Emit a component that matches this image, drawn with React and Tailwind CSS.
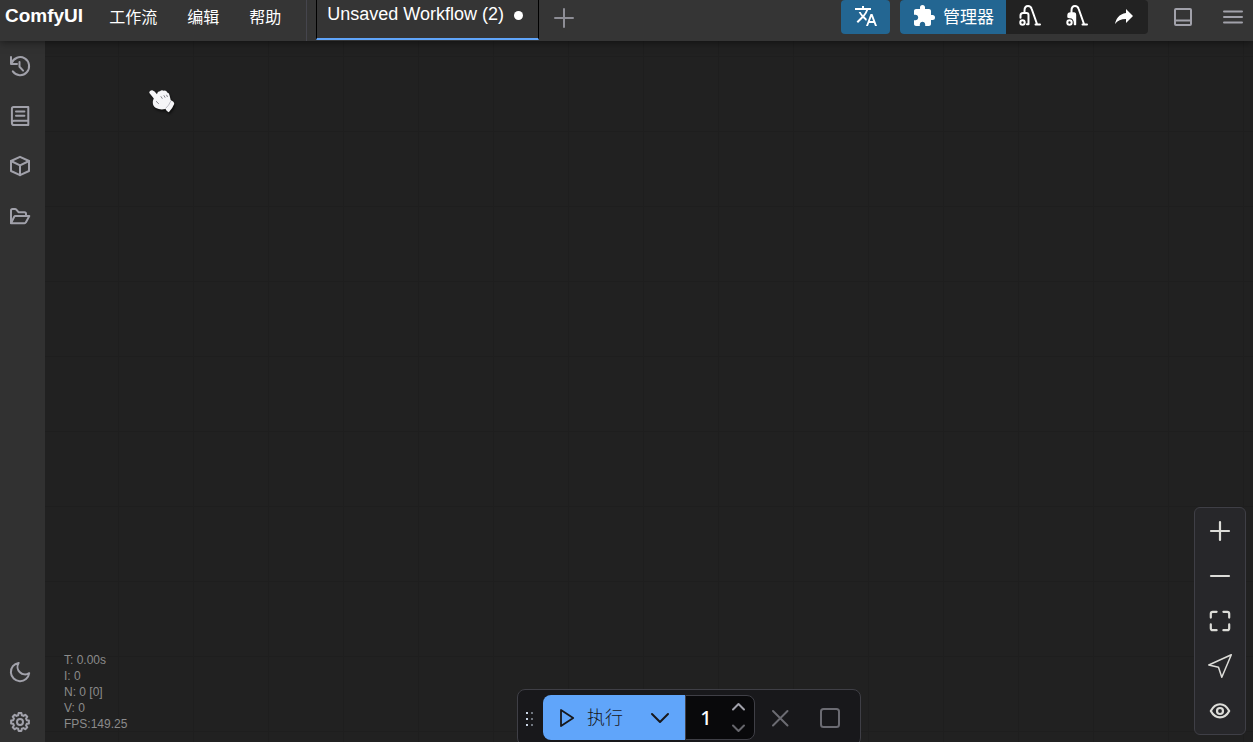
import { useState } from "react";
import { MdExtension, MdTranslate } from "react-icons/md";

const menuItems = ["工作流", "编辑", "帮助"];

const stats = ["T: 0.00s", "I: 0", "N: 0 [0]", "V: 0", "FPS:149.25"];

// eight-tooth outline for the settings gear
const gearPoints = Array.from({ length: 8 })
  .flatMap((_, i) =>
    [
      [-15, 7],
      [-9, 9],
      [9, 9],
      [15, 7],
    ].map(([offset, radius]) => {
      const angle = ((i * 45 + offset) * Math.PI) / 180;
      return `${(12 + radius * Math.cos(angle)).toFixed(2)},${(
        12 +
        radius * Math.sin(angle)
      ).toFixed(2)}`;
    })
  )
  .join(" ");

function Icon({ children, strokeWidth = 1.6, className = "" }) {
  return (
    <svg
      width="24"
      height="24"
      viewBox="0 0 24 24"
      fill="none"
      stroke="currentColor"
      strokeWidth={strokeWidth}
      strokeLinecap="round"
      strokeLinejoin="round"
      aria-hidden="true"
      className={`shrink-0 ${className}`}
    >
      {children}
    </svg>
  );
}

const sidebarTop = [
  {
    label: "队列",
    icon: (
      <>
        <path d="M3 3v7h6" />
        <path d="M3.6 9.2A9 9 0 1 1 4.8 17.4" />
        <path d="M11.5 8v4.8l3.6 3.8" />
      </>
    ),
  },
  {
    label: "节点库",
    icon: (
      <>
        <path d="M20.3 16.8V3H5.6Q3.9 3 3.9 4.7V19q0 2.1 2.1 2.1h14.3v-4.3H6q-2.1 0-2.1 2" />
        <path d="M8 7.4h8.4M8 11.8h8.4" />
      </>
    ),
  },
  {
    label: "模型库",
    icon: (
      <>
        <path d="M12 2.8 21 7v10l-9 4.2L3 17V7z" />
        <path d="m3 7 9 4.4L21 7M12 11.4v9.8" />
      </>
    ),
  },
  {
    label: "工作流",
    icon: (
      <>
        <path d="M3 19V6.5Q3 5 4.5 5H7q.8 0 1.3.6L10.5 8.2H16.5Q18 8.2 18 9.7V12" />
        <path d="M3 19.2 6.2 12.8Q6.6 12 7.5 12H21.3L17.8 18.4Q17.4 19.2 16.5 19.2z" />
      </>
    ),
  },
];

const sidebarBottom = [
  {
    label: "切换主题",
    icon: <path d="M10.6 2.9A9.2 9.2 0 1 0 21.2 13.2 7.6 7.6 0 0 1 10.6 2.9z" />,
  },
  {
    label: "设置",
    icon: (
      <>
        <polygon points={gearPoints} />
        <circle cx="12" cy="12" r="3" />
      </>
    ),
  },
];

const canvasTools = [
  { label: "放大", icon: <path d="M12 3v18M3 12h18" /> },
  { label: "缩小", icon: <path d="M3 12h18" /> },
  {
    label: "适应视图",
    icon: (
      <path d="M2.8 8.6V4.8q0-2 2-2h3.8M15.4 2.8h3.8q2 0 2 2v3.8M21.2 15.4v3.8q0 2-2 2h-3.8M8.6 21.2H4.8q-2 0-2-2v-3.8" />
    ),
  },
  {
    label: "选择模式",
    thin: true,
    icon: <path d="M23.3.8.8 11 10.5 13.3 13.8 23.3z" />,
  },
  {
    label: "显示连线",
    icon: (
      <>
        <path d="M2.8 12C7.5 3 16.5 3 21.2 12 16.5 20.5 7.5 20.5 2.8 12z" />
        <circle cx="12" cy="12" r="3" />
      </>
    ),
  },
];

function SidebarButton({ item }) {
  return (
    <button
      aria-label={item.label}
      className="flex h-[50px] w-10 items-center justify-center text-[#a1a1aa] hover:text-white"
    >
      <Icon strokeWidth={2}>{item.icon}</Icon>
    </button>
  );
}

function Vacuum({ filled }) {
  return (
    <Icon strokeWidth={2}>
      {filled ? (
        <path
          d="M3 14V12.5Q3 10 5.5 10H9Q10.500 10 10.500 12V21.500H9.500Q10 14.500 4.500 14.500z"
          fill="currentColor"
          strokeWidth="1.4"
        />
      ) : (
        <path d="M2.5 14.8V12.5Q2.5 10 5 10H8.500Q10.500 10 10.500 12V21.300H9" />
      )}
      <path d="M6.500 9.500V7.500Q6.500 3 10 3 12.800 3 13.700 6L19 21M17.500 21.500H22" />
      <circle cx="4.500" cy="19.500" r="2.200" />
    </Icon>
  );
}

function TopBar() {
  return (
    <header className="relative z-10 flex h-[41px] shrink-0 items-start justify-between bg-[#353535] shadow-[0_1px_8px_rgba(0,0,0,0.5)]">
      <div className="flex h-full items-start">
        <h1 className="pl-[5px] text-[19px] leading-8 font-bold">ComfyUI</h1>

        <nav className="ml-[11px] flex">
          {menuItems.map((item) => (
            <button
              key={item}
              className="px-[15px] text-base leading-9 hover:bg-[#444]"
            >
              {item}
            </button>
          ))}
        </nav>

        <div className="ml-[10px] h-full w-px bg-[#45454d]" />

        <div className="ml-[9px] flex h-10 items-start border-x border-b-2 border-x-black border-b-[#60a5fa] pr-[15px] pl-[10px]">
          <span className="text-lg leading-7 whitespace-nowrap">
            Unsaved Workflow (2)
          </span>
          <span className="mt-[11px] ml-[10px] size-[9px] rounded-full bg-white" />
        </div>

        <button
          aria-label="新建工作流"
          className="ml-[13px] flex h-9 items-center text-[#8d8d95]"
        >
          <Icon strokeWidth={2}>
            <path d="M12 3v18M3 12h18" />
          </Icon>
        </button>
      </div>

      <div className="flex items-start">
        <button
          aria-label="翻译"
          className="flex h-[34px] w-[49px] items-center justify-center rounded bg-[#236692] pb-[2px]"
        >
          <MdTranslate size={24} />
        </button>

        <div className="ml-[10px] flex h-[34px] overflow-hidden rounded bg-[#222222]">
          <button className="flex w-[106px] items-center bg-[#236692] pl-3 text-[17px] leading-none">
            <MdExtension size={24} className="mb-[3px] shrink-0" />
            <span className="ml-[7px] whitespace-nowrap">管理器</span>
          </button>
          <button
            aria-label="卸载模型"
            className="flex w-[47px] items-center justify-center pb-1"
          >
            <Vacuum />
          </button>
          <button
            aria-label="释放模型和节点缓存"
            className="flex w-[47px] items-center justify-center pb-1"
          >
            <Vacuum filled />
          </button>
          <button
            aria-label="分享"
            className="flex w-12 items-center justify-center pb-[2px]"
          >
            <svg width="24" height="24" viewBox="0 0 24 24" fill="currentColor">
              <path d="M21 12L14 5V9C7 10 4 15 3 20C5.5 16.5 9 14.9 14 14.9V19L21 12Z" />
            </svg>
          </button>
        </div>

        <div className="flex h-[34px] items-center text-[#a1a1aa]">
          <button aria-label="切换底部面板" className="ml-[23px]">
            <Icon strokeWidth={2}>
              <rect x="4" y="4" width="16" height="16" rx="1" />
              <path d="M4 15.500h16" />
            </Icon>
          </button>
          <button aria-label="隐藏菜单" className="mr-2 ml-[26px]">
            <Icon strokeWidth={2}>
              <path d="M3 6.500h18M3 12h18M3 17.500h18" />
            </Icon>
          </button>
        </div>
      </div>
    </header>
  );
}

function ActionBar() {
  const [batchCount, setBatchCount] = useState(1);

  return (
    <div className="absolute top-[648px] left-[472px] flex items-center rounded-lg border border-[#3f3f46] bg-[#18181b] py-[5px] pr-[18px] pl-[7px]">
      <svg width="18" height="24" viewBox="0 0 18 24" className="shrink-0">
        <g fill="#c8d4e4">
          <path d="M1 6h2v2H1zM1 12h2v2H1zM1 18h2v2H1z" />
          <path d="M6 6h2v2H6zM6 12h2v2H6zM6 18h2v2H6z" opacity="0.5" />
        </g>
      </svg>

      <button className="flex h-[45px] items-center rounded-l-lg bg-[#60a5fa] pr-[5px] pl-3 text-[#18181b]">
        <Icon strokeWidth={1.8}>
          <path d="M6 4v16L18.2 12z" />
        </Icon>
        <span className="ml-2 text-lg leading-none font-light whitespace-nowrap">
          执行
        </span>
      </button>
      <button
        aria-label="执行选项"
        className="flex h-[45px] w-[57px] items-center bg-[#60a5fa] pl-5 text-[#18181b]"
      >
        <Icon strokeWidth={2}>
          <path d="m4 8 8 8 8-8" />
        </Icon>
      </button>

      <div className="flex h-[45px] w-[70px] items-center rounded-r-lg border border-[#3f3f46] bg-[#09090b]">
        <input
          aria-label="批次数量"
          value={batchCount}
          onChange={(e) => setBatchCount(Number(e.target.value) || 1)}
          className="w-10 bg-transparent text-center font-['Noto_Sans'] text-xl leading-6 font-medium outline-none"
        />
        <div className="flex flex-col">
          <button
            aria-label="增加"
            onClick={() => setBatchCount(batchCount + 1)}
            className="flex h-[21px] items-center text-[#a1a1aa]"
          >
            <Icon strokeWidth={2}>
              <path d="m7 14.500 5.500-5.500 5.500 5.500" />
            </Icon>
          </button>
          <button
            aria-label="减少"
            onClick={() => setBatchCount(Math.max(1, batchCount - 1))}
            className="flex h-[21px] items-center text-[#66666c]"
          >
            <Icon strokeWidth={2}>
              <path d="m7 9.500 5.500 5.500 5.500-5.500" />
            </Icon>
          </button>
        </div>
      </div>

      <button aria-label="取消" className="ml-[13px] text-[#6b6b72]">
        <Icon strokeWidth={2}>
          <path d="m5 5 14.500 14.500M19.500 5 5 19.500" />
        </Icon>
      </button>
      <button aria-label="清空队列" className="ml-[26px] text-[#6b6b72]">
        <Icon strokeWidth={2}>
          <rect x="3" y="3" width="18" height="18" rx="2.500" />
        </Icon>
      </button>
    </div>
  );
}

function CanvasTools() {
  return (
    <div className="absolute right-[7px] bottom-[7px] flex w-[52px] flex-col items-center rounded-md border border-[#3f3f46] bg-[#27272a] pb-px text-[#dcdcd8]">
      {canvasTools.map((tool) => (
        <button
          key={tool.label}
          aria-label={tool.label}
          className="flex h-[45px] w-full items-center justify-center hover:bg-[#3f3f46]"
        >
          <Icon strokeWidth={tool.thin ? 1.5 : 2.2}>{tool.icon}</Icon>
        </button>
      ))}
    </div>
  );
}

function HandPointer() {
  return (
    <svg
      width="30"
      height="28"
      viewBox="0 0 30 28"
      aria-hidden="true"
      className="absolute top-[47px] left-[102px] drop-shadow-[1px_2px_1px_rgba(0,0,0,0.6)]"
    >
      <path
        d="M2.2 4.8Q2.300 2 5.300 2.300 7.500 3 10 6.300 10.500 3.300 13 3.200 14.500 1.600 16.800 2.700 19.300 2.200 20.300 4.400 22.400 5 22.600 7.500L23.800 12.200Q27.400 13.500 27.200 16 25.500 20.500 21.800 24.300 19.800 23.800 18.500 21 13 22.200 9 20 5 17.500 6 12.500L6.800 10.500z"
        fill="#f6f6f8"
      />
      <path
        d="m13.800 8.300 1.600 2.400M16.800 7.300l1.400 2.400M19.500 6.800l1 2.200M9 13.200l2.800 2.600"
        stroke="#77777f"
        strokeWidth="0.9"
        fill="none"
      />
      <path d="M23.800 13Q22 17.500 18.500 20.500" stroke="#bcbcc4" fill="none" />
    </svg>
  );
}

function App() {
  return (
    <div className="flex h-screen flex-col overflow-hidden bg-[#212121] font-['Liberation_Sans','Noto_Sans_CJK_SC',sans-serif] text-white">
      <TopBar />

      <div className="flex min-h-0 flex-1">
        <aside className="flex w-[45px] shrink-0 flex-col justify-between bg-[#313131]">
          <div>
            {sidebarTop.map((item) => (
              <SidebarButton key={item.label} item={item} />
            ))}
          </div>
          <div className="-mb-[5px]">
            {sidebarBottom.map((item) => (
              <SidebarButton key={item.label} item={item} />
            ))}
          </div>
        </aside>

        <main className="relative min-w-0 flex-1 overflow-hidden bg-[linear-gradient(to_right,#1e1e1e_1px,transparent_1px),linear-gradient(to_bottom,#1e1e1e_1px,transparent_1px)] bg-[size:75px_75px] bg-[position:73px_15px]">
          <div className="absolute bottom-[10px] left-[19px] text-xs leading-4 text-[#8b8b8b]">
            {stats.map((line) => (
              <p key={line}>{line}</p>
            ))}
          </div>
          <HandPointer />
          <ActionBar />
          <CanvasTools />
        </main>
      </div>
    </div>
  );
}

export default App;
